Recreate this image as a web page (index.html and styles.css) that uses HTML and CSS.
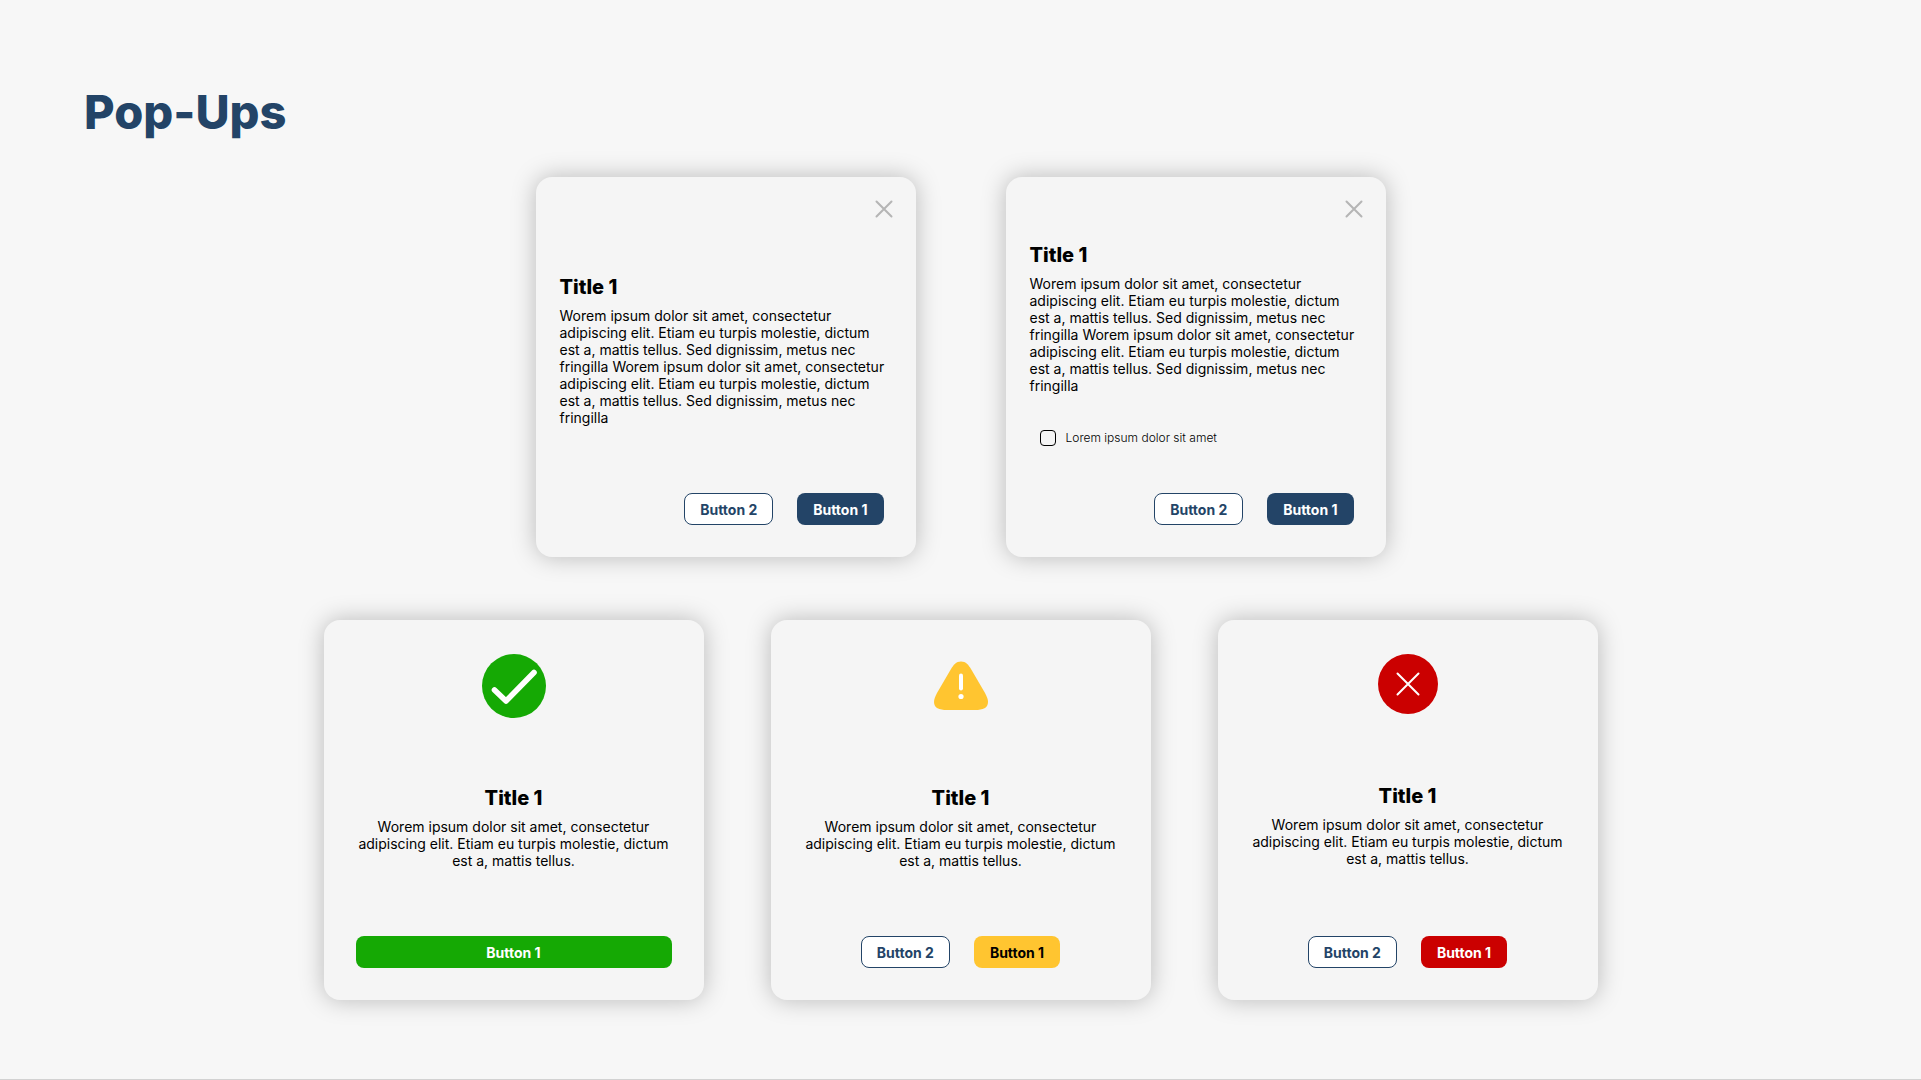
FILE: index.html
```html
<!DOCTYPE html>
<html lang="en">
<head>
    <meta charset="UTF-8">
    <meta name="viewport" content="width=device-width, initial-scale=1.0">
    <title>Pop-Ups</title>
    <link rel="stylesheet" href="styles.css">
</head>
<body>
    <main class="page">
        <h1 class="page-title">Pop-Ups</h1>

        <!-- Dialogs with a close button -->
        <div class="popup-row dialogs">
            <section class="popup popup-dialog">
                <button class="close-btn" type="button" aria-label="Close">
                    <svg width="18" height="18" viewBox="0 0 18 18">
                        <path d="M1.5 1.5L16.5 16.5M16.5 1.5L1.5 16.5"/>
                    </svg>
                </button>
                <div class="popup-body">
                    <h2>Title 1</h2>
                    <p>Worem ipsum dolor sit amet, consectetur adipiscing elit. Etiam eu turpis molestie, dictum est a, mattis tellus. Sed dignissim, metus nec fringilla Worem ipsum dolor sit amet, consectetur adipiscing elit. Etiam eu turpis molestie, dictum est a, mattis tellus. Sed dignissim, metus nec fringilla</p>
                </div>
                <div class="actions">
                    <button class="btn btn-outline" type="button">Button 2</button>
                    <button class="btn btn-primary" type="button">Button 1</button>
                </div>
            </section>

            <section class="popup popup-dialog">
                <button class="close-btn" type="button" aria-label="Close">
                    <svg width="18" height="18" viewBox="0 0 18 18">
                        <path d="M1.5 1.5L16.5 16.5M16.5 1.5L1.5 16.5"/>
                    </svg>
                </button>
                <div class="popup-body">
                    <h2>Title 1</h2>
                    <p>Worem ipsum dolor sit amet, consectetur adipiscing elit. Etiam eu turpis molestie, dictum est a, mattis tellus. Sed dignissim, metus nec fringilla Worem ipsum dolor sit amet, consectetur adipiscing elit. Etiam eu turpis molestie, dictum est a, mattis tellus. Sed dignissim, metus nec fringilla</p>
                    <div class="check">
                        <input type="checkbox" id="confirm">
                        <label for="confirm">Lorem ipsum dolor sit amet</label>
                    </div>
                </div>
                <div class="actions">
                    <button class="btn btn-outline" type="button">Button 2</button>
                    <button class="btn btn-primary" type="button">Button 1</button>
                </div>
            </section>
        </div>

        <!-- Status messages -->
        <div class="popup-row statuses">
            <section class="popup popup-status">
                <svg class="status-icon" width="66" height="64" viewBox="0 0 66 64">
                    <circle cx="33" cy="32" r="32" fill="#15a904"/>
                    <path d="M13.5 36L25 47L53 18.5" fill="none" stroke="#fff" stroke-width="5.6" stroke-linecap="round" stroke-linejoin="round"/>
                </svg>
                <div class="popup-body">
                    <h2>Title 1</h2>
                    <p>Worem ipsum dolor sit amet, consectetur adipiscing elit. Etiam eu turpis molestie, dictum est a, mattis tellus.</p>
                </div>
                <div class="actions">
                    <button class="btn btn-success btn-wide" type="button">Button 1</button>
                </div>
            </section>

            <section class="popup popup-status">
                <svg class="status-icon" width="64" height="64" viewBox="0 0 64 64">
                    <path d="M32 7.5C37 7.5 39.5 11 42 15L56 39C58 43 59 45.5 59 48C59 54 54 56 46 56H18C10 56 5 54 5 48C5 45.5 6 43 8 39L22 15C24.5 11 27 7.5 32 7.5Z" fill="#ffc530"/>
                    <path d="M32 21.5V34.5" stroke="#fff" stroke-width="4" stroke-linecap="round"/>
                    <circle cx="32" cy="42.5" r="2.6" fill="#fff"/>
                </svg>
                <div class="popup-body">
                    <h2>Title 1</h2>
                    <p>Worem ipsum dolor sit amet, consectetur adipiscing elit. Etiam eu turpis molestie, dictum est a, mattis tellus.</p>
                </div>
                <div class="actions">
                    <button class="btn btn-outline" type="button">Button 2</button>
                    <button class="btn btn-warning" type="button">Button 1</button>
                </div>
            </section>

            <section class="popup popup-status">
                <svg class="status-icon" width="60" height="60" viewBox="0 0 60 60">
                    <circle cx="30" cy="30" r="30" fill="#cb0000"/>
                    <path d="M19.5 19.5L40.5 40.5M40.5 19.5L19.5 40.5" stroke="#fff" stroke-width="2" stroke-linecap="round"/>
                </svg>
                <div class="popup-body">
                    <h2>Title 1</h2>
                    <p>Worem ipsum dolor sit amet, consectetur adipiscing elit. Etiam eu turpis molestie, dictum est a, mattis tellus.</p>
                </div>
                <div class="actions">
                    <button class="btn btn-outline" type="button">Button 2</button>
                    <button class="btn btn-danger" type="button">Button 1</button>
                </div>
            </section>
        </div>
    </main>
</body>
</html>
```
FILE: styles.css
```css
* {
    margin: 0;
    padding: 0;
    box-sizing: border-box;
}

body {
    font-family: Inter, 'Liberation Sans', sans-serif;
    background: #f7f7f7;
    color: #000;
}

.page {
    min-height: 100vh;
    padding: 83px 24px 32px;
    border-bottom: 1px solid #d2d2d2;
}

.page-title {
    margin: 0 60px 36px;
    font-size: 47px;
    line-height: 58px;
    font-weight: 800;
    color: #234467;
}

.popup-row {
    display: flex;
    flex-wrap: wrap;
    justify-content: center;
}

.dialogs {
    gap: 48px 90px;
    margin-bottom: 63px;
}

.statuses {
    gap: 48px 67px;
}

.popup {
    display: flex;
    flex-direction: column;
    width: 380px;
    min-height: 380px;
    padding-bottom: 32px;
    border-radius: 16px;
    background: #f5f5f5;
    box-shadow: 0 0 24px rgba(0, 0, 0, 0.25);
}

.popup-body {
    display: flex;
    flex: 1;
    flex-direction: column;
    justify-content: center;
}

.popup-body h2 {
    margin-bottom: 7px;
    font-size: 20px;
    line-height: 25px;
    font-weight: 800;
}

.popup-body p {
    font-size: 14px;
    line-height: 17px;
}

.popup-dialog {
    padding-top: 23px;
}

.popup-dialog .popup-body {
    padding: 0 24px 10px;
}

.popup-status {
    padding-top: 34px;
    text-align: center;
}

.popup-status .popup-body {
    padding: 0 32px;
}

.status-icon {
    align-self: center;
}

.close-btn {
    align-self: flex-end;
    height: 18px;
    margin-right: 23px;
    border: none;
    background: none;
    cursor: pointer;
}

.close-btn svg {
    display: block;
    fill: none;
    stroke: #b5b5b5;
    stroke-width: 2;
    stroke-linecap: round;
}

.check {
    display: flex;
    align-items: center;
    gap: 10px;
    margin: 36px 0 12px;
    padding-left: 10px;
    font-size: 12px;
    line-height: 16px;
    font-weight: 300;
}

.check input {
    appearance: none;
    width: 16px;
    height: 16px;
    border: 1px solid #000;
    border-radius: 4px;
}

.check input:checked {
    background: #234467;
}

.actions {
    display: flex;
    justify-content: flex-end;
    gap: 24px;
    padding: 0 32px;
}

.popup-status .actions {
    justify-content: center;
}

.btn {
    height: 32px;
    padding: 0 16px;
    border: none;
    border-radius: 8px;
    font-family: inherit;
    font-size: 14px;
    font-weight: 700;
    color: #fff;
    cursor: pointer;
}

.btn-outline {
    padding: 0 15px;
    border: 1px solid #234467;
    background: #fff;
    color: #234467;
}

.btn-primary {
    background: #234467;
}

.btn-success {
    background: #15a904;
}

.btn-warning {
    background: #ffc530;
    color: #000;
}

.btn-danger {
    background: #cb0000;
}

.btn-wide {
    flex: 1;
}
```
